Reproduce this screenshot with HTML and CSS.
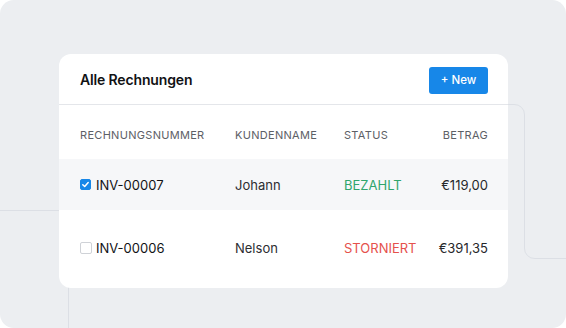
FILE: index.html
```html
<!DOCTYPE html>
<html lang="de">
<head>
<meta charset="utf-8">
<link rel="stylesheet" href="styles.css">
</head>
<body>
<div class="stage">
  <svg class="deco" width="566" height="328" viewBox="0 0 566 328" aria-hidden="true">
    <path d="M300 104.5 H514 A10 10 0 0 1 524.5 115 V248 A10 10 0 0 0 535 258.5 H566" />
    <path d="M0 210.5 H58 A10 10 0 0 1 68.5 221 V328" />
  </svg>
  <div class="card">
    <div class="card-head">
      <h1 class="title">Alle Rechnungen</h1>
      <button class="btn-new">+ New</button>
    </div>
    <div class="row row-head">
      <div>Rechnungsnummer</div>
      <div>Kundenname</div>
      <div>Status</div>
      <div class="amount">Betrag</div>
    </div>
    <div class="row row-body row-selected">
      <div class="inv"><span class="cb cb-on"><svg width="9" height="9" viewBox="0 0 9 9"><path d="M1.8 4.7 L3.7 6.5 L7.2 2.6" fill="none" stroke="#fff" stroke-width="1.5" stroke-linecap="round" stroke-linejoin="round"/></svg></span>INV-00007</div>
      <div class="name">Johann</div>
      <div class="status paid">BEZAHLT</div>
      <div class="amount">€119,00</div>
    </div>
    <div class="row row-body row-last">
      <div class="inv"><span class="cb"></span>INV-00006</div>
      <div class="name">Nelson</div>
      <div class="status void">STORNIERT</div>
      <div class="amount">€391,35</div>
    </div>
  </div>
</div>
</body>
</html>
```
FILE: styles.css
```css
html, body {
  margin: 0;
  padding: 0;
  background: #ffffff;
}
body {
  font-family: Inter, "Noto Sans", sans-serif;
  color: #1a1b1e;
}
.stage {
  position: relative;
  width: 566px;
  height: 328px;
  background: #eceef1;
  border-radius: 14px;
  overflow: hidden;
  padding: 54px 0 0 59px;
  box-sizing: border-box;
}
.deco {
  position: absolute;
  left: 0;
  top: 0;
}
.deco path {
  fill: none;
  stroke: #dcdfe5;
  stroke-width: 1;
}
.card {
  position: relative;
  width: 449px;
  height: 234px;
  background: #ffffff;
  border-radius: 12px;
  overflow: hidden;
}
.card-head {
  height: 50px;
  display: flex;
  align-items: center;
  justify-content: space-between;
  padding: 0 20px 0 21px;
  border-bottom: 1px solid #e4e6ea;
}
.title {
  margin: 0;
  font-size: 14px;
  font-weight: 600;
  color: #111214;
  letter-spacing: -0.15px;
  padding-top: 1px;
}
.btn-new {
  width: 59px;
  height: 27px;
  border: 0;
  border-radius: 3px;
  background: #1787e8;
  color: #ffffff;
  font-family: Inter, "Noto Sans", sans-serif;
  font-size: 11.5px;
  font-weight: 500;
  padding: 0;
  margin-top: 2px;
}
.row {
  display: grid;
  grid-template-columns: 155px 109px 1fr auto;
  align-items: center;
  padding: 0 20px 0 21px;
}
.row-head {
  height: 54px;
  box-sizing: border-box;
  padding-top: 5px;
  font-size: 11px;
  text-transform: uppercase;
  letter-spacing: 0.3px;
  color: #5d6066;
}
.row-body {
  font-size: 13px;
  color: #222326;
}
.row-selected {
  height: 51px;
  background: #f6f7f9;
}
.row-last {
  height: 76px;
}
.inv {
  display: flex;
  align-items: center;
  gap: 5px;
  color: #121316;
}
.cb {
  width: 11px;
  height: 11px;
  box-sizing: border-box;
  border: 1px solid #cfd2d7;
  border-radius: 2px;
  background: #fff;
  display: flex;
  align-items: center;
  justify-content: center;
}
.row-last .cb {
  width: 12px;
  height: 12px;
}
.row-last .inv {
  gap: 4px;
}
.cb-on {
  background: #1787e8;
  border-color: #1787e8;
}
.name {
  color: #2c2d31;
}
.paid {
  color: #2fa56c;
}
.void {
  color: #e5514c;
}
.amount {
  text-align: right;
}
.row-body .amount {
  color: #26272a;
}
```
